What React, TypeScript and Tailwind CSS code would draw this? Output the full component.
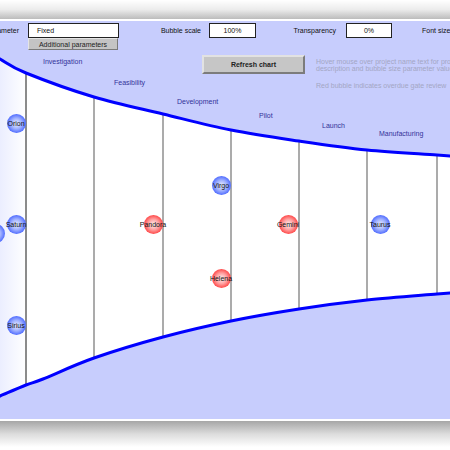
type Pt = [number, number]

// chart geometry, in panel coordinates (panel starts at page y = 21)
const topCurve: Pt[] = [
    [-12, 31], [0, 38], [26, 52], [94, 76], [163, 93], [231, 109],
    [299, 120], [367, 129], [437, 134], [462, 136],
]
const bottomCurve: Pt[] = [
    [-12, 380], [0, 375], [26, 364], [43, 358], [94, 337], [163, 316],
    [231, 300], [299, 288], [367, 279], [437, 273], [462, 271],
]
const gateXs = [26, 94, 163, 231, 299, 367, 437]

function smooth(pts: Pt[]) {
    let d = `M${pts[0][0]},${pts[0][1]}`
    for (let i = 0; i < pts.length - 1; i++) {
        const p0 = pts[i - 1] || pts[i]
        const p1 = pts[i]
        const p2 = pts[i + 1]
        const p3 = pts[i + 2] || p2
        const c1: Pt = [p1[0] + (p2[0] - p0[0]) / 6, p1[1] + (p2[1] - p0[1]) / 6]
        const c2: Pt = [p2[0] - (p3[0] - p1[0]) / 6, p2[1] - (p3[1] - p1[1]) / 6]
        d += ` C${c1[0]},${c1[1]} ${c2[0]},${c2[1]} ${p2[0]},${p2[1]}`
    }
    return d
}

function yAt(pts: Pt[], x: number) {
    for (let i = 0; i < pts.length - 1; i++) {
        const [x1, y1] = pts[i]
        const [x2, y2] = pts[i + 1]
        if (x >= x1 && x <= x2) return y1 + ((x - x1) / (x2 - x1)) * (y2 - y1)
    }
    return pts[pts.length - 1][1]
}

const stages = [
    { name: 'Investigation', x: 43, y: 40 },
    { name: 'Feasibility', x: 114, y: 61 },
    { name: 'Development', x: 177, y: 80 },
    { name: 'Pilot', x: 259, y: 94 },
    { name: 'Launch', x: 322, y: 104 },
    { name: 'Manufacturing', x: 379, y: 112 },
]

const bubbles = [
    { name: 'Orion', x: 16, y: 102, red: false },
    { name: 'Saturn', x: 16, y: 203, red: false },
    { name: '', x: -5, y: 212, red: false },
    { name: 'Sirius', x: 16, y: 304, red: false },
    { name: 'Pandora', x: 153, y: 203, red: true },
    { name: 'Virgo', x: 221, y: 164, red: false },
    { name: 'Helena', x: 221, y: 257, red: true },
    { name: 'Gemini', x: 288, y: 203, red: true },
    { name: 'Taurus', x: 380, y: 203, red: false },
]

function FunnelChart() {
    const top = smooth(topCurve)
    const bottom = smooth(bottomCurve)
    const bottomRev = smooth([...bottomCurve].reverse()).replace(/^M/, 'L')
    const funnel = `${top} ${bottomRev} Z`

    return (
        <svg className="absolute inset-0" width="450" height="398" viewBox="0 0 450 398">
            <defs>
                <clipPath id="funnel-clip">
                    <path d={funnel} />
                </clipPath>
                <linearGradient id="left-fade" x1="0" x2="1" y1="0" y2="0">
                    <stop offset="0" stopColor="#e2e6ff" />
                    <stop offset="1" stopColor="#ffffff" />
                </linearGradient>
            </defs>
            <path d={funnel} fill="#ffffff" />
            <rect x="-12" y="0" width="38" height="398" fill="url(#left-fade)" clipPath="url(#funnel-clip)" />
            {gateXs.map((x, i) => (
                <line
                    key={x}
                    x1={x}
                    x2={x}
                    y1={yAt(topCurve, x)}
                    y2={yAt(bottomCurve, x)}
                    stroke={i === 0 ? '#5a5a5a' : '#a2a2a2'}
                    strokeWidth={i === 0 ? 1.4 : 1.8}
                />
            ))}
            <path d={top} fill="none" stroke="#0000ff" strokeWidth="3" />
            <path d={bottom} fill="none" stroke="#0000ff" strokeWidth="3" />
        </svg>
    )
}

export default function App() {
    return (
        <div className="w-[450px] h-[450px] overflow-hidden bg-white font-['Liberation_Sans',Arial,sans-serif] text-[7px] leading-[7px]">
            <div className="h-[19px] bg-gradient-to-b from-white via-[#ececec] to-[#bcbcbc]" />
            <div className="h-[2px] bg-white" />

            <div className="relative h-[398px] bg-[#c7cdfd]">
                <FunnelChart />

                {stages.map((s) => (
                    <span
                        key={s.name}
                        className="absolute whitespace-nowrap text-[#33339a] -translate-y-1/2"
                        style={{ left: s.x, top: s.y }}
                    >
                        {s.name}
                    </span>
                ))}

                {bubbles.map((b, i) => (
                    <div
                        key={i}
                        className={`absolute w-[19px] h-[19px] -ml-[9.5px] -mt-[9.5px] rounded-full flex items-center justify-center ${b.red
                                ? 'bg-[radial-gradient(circle,#fff3f3_0%,#ffa0a0_40%,#ff3434_78%,#ff8080_100%)]'
                                : 'bg-[radial-gradient(circle,#eef1ff_0%,#9fb0ff_40%,#3d5cff_78%,#8298ff_100%)]'
                            }`}
                        style={{ left: b.x, top: b.y }}
                    >
                        <span className="whitespace-nowrap text-[#111]">{b.name}</span>
                    </div>
                ))}

                {/* parameter controls */}
                <div className="relative flex items-center h-[15px] pt-[2px] box-content text-[#111]">
                    <div className="w-[28px] shrink-0 pr-[9px] flex justify-end overflow-hidden whitespace-nowrap">
                        <span>Bubble size parameter</span>
                    </div>
                    <div className="w-[91px] shrink-0 h-[15px] bg-white border border-[#222] pl-[8px] flex items-center">
                        Fixed
                    </div>
                    <div className="w-[90px] shrink-0 pr-[8px] text-right whitespace-nowrap">Bubble scale</div>
                    <div className="w-[47px] shrink-0 h-[15px] bg-white border border-[#222] flex items-center justify-center">
                        100%
                    </div>
                    <div className="w-[90px] shrink-0 pr-[10px] text-right whitespace-nowrap">Transparency</div>
                    <div className="w-[46px] shrink-0 h-[15px] bg-white border border-[#222] flex items-center justify-center">
                        0%
                    </div>
                    <div className="pl-[30px] whitespace-nowrap">Font size</div>
                </div>

                <div className="relative ml-[28px] w-[90px] h-[12px] bg-[#c4c4c4] border border-t-[#e4e4e4] border-l-[#e4e4e4] border-r-[#7a7a7a] border-b-[#7a7a7a] flex items-center justify-center text-[#222] whitespace-nowrap">
                    Additional parameters
                </div>

                <div className="relative flex items-start mt-[5px]">
                    <button className="ml-[202px] shrink-0 w-[103px] h-[19px] bg-[#c6c6c6] border-2 border-t-[#e2e2e2] border-l-[#e2e2e2] border-r-[#7c7c7c] border-b-[#7c7c7c] font-bold text-[#222] flex items-center justify-center">
                        Refresh chart
                    </button>
                    <div className="ml-[11px] mt-[3px] text-[#a3a6c4] whitespace-nowrap">
                        <p>Hover mouse over project name text for project</p>
                        <p>description and bubble size parameter value</p>
                        <p className="mt-[10px]">Red bubble indicates overdue gate review</p>
                    </div>
                </div>
            </div>

            <div className="h-[2px] bg-white" />
            <div className="h-[26px] bg-gradient-to-b from-[#a6a6a6] via-[#dcdcdc] to-white" />
        </div>
    )
}
